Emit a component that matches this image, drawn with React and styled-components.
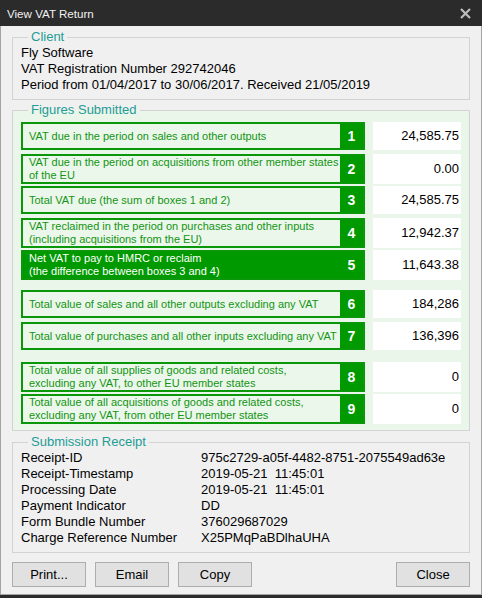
import React from "react";
import styled, { createGlobalStyle } from "styled-components";

const Global = createGlobalStyle`
  html, body { margin: 0; padding: 0; background: #2b2b2b; }
  body { font-family: "Liberation Sans", Arial, sans-serif; }
  * { box-sizing: border-box; }
`;

const Window = styled.div`
  width: 482px;
  height: 598px;
  display: flex;
  flex-direction: column;
  background: #2b2b2b;
`;

const TitleBar = styled.div`
  height: 26px;
  flex: none;
  display: flex;
  align-items: center;
  justify-content: space-between;
  padding: 0 11px 0 7px;
  color: #f2f2f2;
  font-size: 11.6px;
`;

const CloseGlyph = styled.svg`
  width: 11px;
  height: 11px;
  display: block;
`;

const Body = styled.div`
  height: 569px;
  flex: none;
  background: #f0f0f0;
  border: 1px solid #a3a3a3;
  border-top: none;
  padding: 3px 11px 0;
  display: flex;
  flex-direction: column;
  color: #000;
  font-size: 13px;
  line-height: 16px;
`;

const Group = styled.fieldset`
  margin: ${(p) => p.$mt || 0}px 0 0;
  padding: 0 8px ${(p) => p.$pb}px;
  min-inline-size: 0;
  border: 1px solid #d3d3d3;
  border-radius: 0;
  background: ${(p) => p.$bg || "transparent"};
`;

const Caption = styled.legend`
  margin-left: 7px;
  padding: 0 3px;
  color: #1e9c96;
  font-size: 13px;
  line-height: 16px;
`;

const Line = styled.div`
  white-space: pre;
`;

const Figures = styled.div`
  padding-top: 4px;
  display: flex;
  flex-direction: column;
  gap: 12px;
`;

const RowGroup = styled.div`
  display: flex;
  flex-direction: column;
  gap: 4px;
`;

const Row = styled.div`
  height: 28px;
  display: grid;
  grid-template-columns: 1fr 88px;
  gap: 8px;
`;

const LabelBox = styled.div`
  display: flex;
  border: 2px solid #0a980a;
  background: ${(p) => (p.$hl ? "#009900" : "#ebf7eb")};
  min-width: 0;
`;

const LabelText = styled.div`
  flex: 1;
  display: flex;
  align-items: center;
  padding-left: 6px;
  font-size: 11px;
  line-height: 13px;
  color: ${(p) => (p.$hl ? "#ffffff" : "#139413")};
  white-space: pre;
`;

const BoxNo = styled.div`
  width: 23px;
  flex: none;
  background: #009900;
  color: #fff;
  font-weight: bold;
  font-size: 14px;
  display: flex;
  align-items: center;
  justify-content: center;
`;

const Value = styled.div`
  background: #fff;
  display: flex;
  align-items: center;
  justify-content: flex-end;
  padding-right: 2px;
  font-size: 13px;
`;

const ReceiptGrid = styled.div`
  display: grid;
  grid-template-columns: 180px 1fr;
`;

const Buttons = styled.div`
  margin-top: 9px;
  display: flex;
  gap: 9px;
`;

const Button = styled.button`
  width: 74px;
  height: 25px;
  margin-left: ${(p) => (p.$right ? "auto" : "0")};
  background: #e1e1e1;
  border: 1px solid #adadad;
  border-radius: 0;
  font-family: "Liberation Sans", Arial, sans-serif;
  font-size: 13px;
  color: #000;
  padding: 0;
`;

const rows = [
  [
    { n: 1, t: "VAT due in the period on sales and other outputs", v: "24,585.75" },
    { n: 2, t: "VAT due in the period on acquisitions from other member states\nof the EU", v: "0.00" },
    { n: 3, t: "Total VAT due (the sum of boxes 1 and 2)", v: "24,585.75" },
    { n: 4, t: "VAT reclaimed in the period on purchases and other inputs\n(including acquisitions from the EU)", v: "12,942.37" },
    { n: 5, t: "Net VAT to pay to HMRC or reclaim\n(the difference between boxes 3 and 4)", v: "11,643.38", hl: true },
  ],
  [
    { n: 6, t: "Total value of sales and all other outputs excluding any VAT", v: "184,286" },
    { n: 7, t: "Total value of purchases and all other inputs excluding any VAT", v: "136,396" },
  ],
  [
    { n: 8, t: "Total value of all supplies of goods and related costs,\nexcluding any VAT, to other EU member states", v: "0" },
    { n: 9, t: "Total value of all acquisitions of goods and related costs,\nexcluding any VAT, from other EU member states", v: "0" },
  ],
];

const receipt = [
  ["Receipt-ID", "975c2729-a05f-4482-8751-2075549ad63e"],
  ["Receipt-Timestamp", "2019-05-21  11:45:01"],
  ["Processing Date", "2019-05-21  11:45:01"],
  ["Payment Indicator", "DD"],
  ["Form Bundle Number", "376029687029"],
  ["Charge Reference Number", "X25PMqPaBDlhaUHA"],
];

export default function App() {
  return (
    <Window>
      <Global />
      <TitleBar>
        <span>View VAT Return</span>
        <CloseGlyph viewBox="0 0 11 11">
          <path d="M1 1 L10 10 M10 1 L1 10" stroke="#bdbdbd" strokeWidth="2.2" />
        </CloseGlyph>
      </TitleBar>
      <Body>
        <Group $pb={6}>
          <Caption>Client</Caption>
          <Line>Fly Software</Line>
          <Line>VAT Registration Number 292742046</Line>
          <Line>Period from 01/04/2017 to 30/06/2017. Received 21/05/2019</Line>
        </Group>
        <Group $mt={2} $pb={8} $bg="#eaf6ea">
          <Caption>Figures Submitted</Caption>
          <Figures>
            {rows.map((g, gi) => (
              <RowGroup key={gi}>
                {g.map((r) => (
                  <Row key={r.n}>
                    <LabelBox $hl={r.hl}>
                      <LabelText $hl={r.hl}>{r.t}</LabelText>
                      <BoxNo>{r.n}</BoxNo>
                    </LabelBox>
                    <Value>{r.v}</Value>
                  </Row>
                ))}
              </RowGroup>
            ))}
          </Figures>
        </Group>
        <Group $mt={3} $pb={6}>
          <Caption>Submission Receipt</Caption>
          <ReceiptGrid>
            {receipt.map(([k, v]) => (
              <React.Fragment key={k}>
                <Line>{k}</Line>
                <Line>{v}</Line>
              </React.Fragment>
            ))}
          </ReceiptGrid>
        </Group>
        <Buttons>
          <Button>Print...</Button>
          <Button>Email</Button>
          <Button>Copy</Button>
          <Button $right>Close</Button>
        </Buttons>
      </Body>
    </Window>
  );
}
